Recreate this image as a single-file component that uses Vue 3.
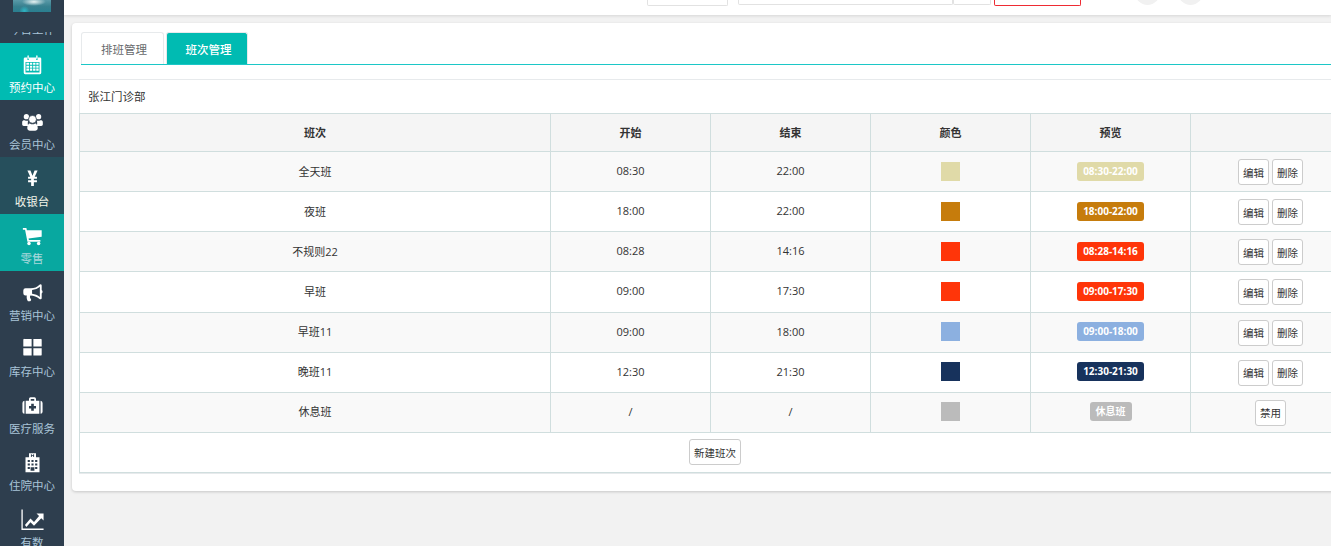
<script setup>
const nav = [
  { label: '预约中心', icon: 'calendar', tone: 'active' },
  { label: '会员中心', icon: 'users', tone: '' },
  { label: '收银台', icon: 'yen', tone: 'cash' },
  { label: '零售', icon: 'cart', tone: 'retail' },
  { label: '营销中心', icon: 'horn', tone: '' },
  { label: '库存中心', icon: 'grid', tone: '' },
  { label: '医疗服务', icon: 'med', tone: '' },
  { label: '住院中心', icon: 'hospital', tone: '' },
  { label: '有数', icon: 'chart', tone: '' }
]
const rows = [
  { name: '全天班', start: '08:30', end: '22:00', color: '#e0daa8', preview: '08:30-22:00' },
  { name: '夜班', start: '18:00', end: '22:00', color: '#c67c0c', preview: '18:00-22:00' },
  { name: '不规则22', start: '08:28', end: '14:16', color: '#ff3509', preview: '08:28-14:16' },
  { name: '早班', start: '09:00', end: '17:30', color: '#ff3509', preview: '09:00-17:30' },
  { name: '早班11', start: '09:00', end: '18:00', color: '#8cb0e0', preview: '09:00-18:00' },
  { name: '晚班11', start: '12:30', end: '21:30', color: '#17325c', preview: '12:30-21:30' },
  { name: '休息班', start: '/', end: '/', color: '#bbbbbb', preview: '休息班', rest: true }
]
</script>

<template>
  <div class="page">
    <aside class="side">
      <div class="logo-wrap"><div class="logo"></div></div>
      <div class="clipped"><span>今日工作</span></div>
      <a v-for="n in nav" :key="n.label" class="nav" :class="n.tone">
        <svg class="ico" viewBox="0 0 24 24" fill="#fff">
          <template v-if="n.icon === 'calendar'">
            <path fill-rule="evenodd" d="M3.500 4H6V6.500H8V4H16V6.500H18V4H20.500A1.500 1.500 0 0 1 22 5.500V21.500A1.500 1.500 0 0 1 20.500 23H3.500A1.500 1.500 0 0 1 2 21.500V5.500A1.500 1.500 0 0 1 3.500 4ZM4 9V21H20V9Z"/>
            <rect x="6.200" y="1.500" width="1.600" height="4.200" rx=".8"/><rect x="16.200" y="1.500" width="1.600" height="4.200" rx=".8"/>
            <path d="M5 10h3v2.300H5zM9 10h2.700v2.300H9zM12.700 10h2.700v2.300h-2.700zM16.300 10H19v2.300h-2.700zM5 13.300h3v2.300H5zM9 13.300h2.700v2.300H9zM12.700 13.300h2.700v2.300h-2.700zM16.300 13.300H19v2.300h-2.700zM5 16.600h3V19H5zM9 16.600h2.700V19H9zM12.700 16.600h2.700V19h-2.700zM16.300 16.600H19V19h-2.700z"/>
          </template>
          <template v-else-if="n.icon === 'users'">
            <circle cx="5" cy="6.500" r="3"/><circle cx="19" cy="6.500" r="3"/>
            <path d="M.2 12.500C.2 11 2 10.300 3.500 10.800 5 11.400 6 11 7 11 6.400 13 6.500 15 7.200 17H2C1 17 .2 16 .2 15ZM23.800 12.500C23.800 11 22 10.300 20.500 10.800 19 11.400 18 11 17 11 17.600 13 17.500 15 16.800 17H22C23 17 23.800 16 23.800 15Z"/>
            <circle cx="12" cy="9.500" r="4.500" stroke="#2e3e4e" stroke-width=".8"/>
            <path d="M6 19.500C6 16.500 7.500 14 9 14.200 11 15.500 13 15.500 15 14.200 16.500 14 18 16.500 18 19.500 18 21.500 16.500 22.500 15 22.500H9C7.500 22.500 6 21.500 6 19.500Z"/>
          </template>
          <template v-else-if="n.icon === 'yen'">
            <path transform="translate(12 11.500) scale(.78 .92) translate(-12 -12)" d="M4.500 2.500H9L12 9.200 15 2.500H19.500L15.300 10.500H18.500V13H14V14.800H18.500V17.300H14V22H10V17.300H5.500V14.800H10V13H5.500V10.500H8.700Z"/>
          </template>
          <template v-else-if="n.icon === 'cart'">
            <path d="M1 3.500H5L5.600 6H22.500V13.500L7.500 15.300 7.900 17H21V19H6.200L3.500 5.500H1Z"/>
            <circle cx="8" cy="21" r="2"/><circle cx="19" cy="21" r="2"/>
          </template>
          <template v-else-if="n.icon === 'horn'">
            <path fill-rule="evenodd" d="M21 2.500A1.500 1.500 0 0 1 22.500 4V9.200A2.300 2.300 0 0 1 22.500 13V18.500A1.500 1.500 0 0 1 20 19.300C17 16.500 13.500 15.500 9.500 15.300 8.800 16.800 9 18 10.200 19.500 10.800 20.500 10.300 21.500 9.300 22H6.800C5.500 20 5 17.500 5.500 15.300H4A2.500 2.500 0 0 1 1.500 12.800V9.700A2.500 2.500 0 0 1 4 7.200H10C14 7.200 17.500 5.800 20 3.100A1.500 1.500 0 0 1 21 2.500ZM20.400 5.500C18 7.500 15 8.800 11.500 9.100V13.300C15 13.700 18 15 20.400 17Z"/>
          </template>
          <template v-else-if="n.icon === 'grid'">
            <path transform="translate(0 -1.500)" d="M1.500 3.500A1.200 1.200 0 0 1 2.700 2.500H11V11.200H1.500ZM13 2.500H21.300A1.200 1.200 0 0 1 22.500 3.500V11.200H13ZM1.500 13.200H11V21.500H2.700A1.200 1.200 0 0 1 1.500 20.500ZM13 13.200H22.500V20.500A1.200 1.200 0 0 1 21.300 21.500H13Z"/>
          </template>
          <template v-else-if="n.icon === 'med'">
            <path fill-rule="evenodd" d="M8 6.500V4.500A1.800 1.800 0 0 1 9.800 2.700H14.200A1.800 1.800 0 0 1 16 4.500V6.500H19.800V21.500H4.200V6.500ZM10 4.700V6.500H14V4.700ZM10.500 10V12.500H8V15.500H10.500V18H13.500V15.500H16V12.500H13.500V10Z"/>
            <path d="M2.800 6.500V21.500A2.500 2.500 0 0 1 .5 19V9A2.500 2.500 0 0 1 2.800 6.500ZM21.200 6.500A2.500 2.500 0 0 1 23.500 9V19A2.500 2.500 0 0 1 21.200 21.500Z"/>
          </template>
          <template v-else-if="n.icon === 'hospital'">
            <path fill-rule="evenodd" d="M8 1.500H16V6H20V23H4V6H8ZM10.200 2.500V5.800H11.200V4.600H12.800V5.800H13.800V2.500H12.800V3.600H11.200V2.500ZM6.500 9V11.500H9V9ZM10.800 9V11.500H13.200V9ZM15 9V11.500H17.500V9ZM6.500 13V15.500H9V13ZM10.800 13V15.500H13.200V13ZM15 13V15.500H17.500V13ZM6.500 17V19.500H9V17ZM15 17V19.500H17.500V17ZM9.800 17.500V21.500H14.200V17.500Z"/>
          </template>
          <template v-else>
            <g transform="translate(12 12) scale(1.150) translate(-12 -12)">
              <path d="M1 2H2.300V21H23V22.500H1Z"/>
              <path d="M4.500 17.500 10 11 13.500 14.500 18.500 8.500 16 6H23V13L20.700 10.700 13.500 18.300 10 14.800 6 19.500Z"/>
            </g>
          </template>
        </svg>
        <span class="nav-label">{{ n.label }}</span>
      </a>
    </aside>

    <div class="main">
      <header class="top">
        <div class="ctl select"></div>
        <div class="search">
          <div class="ctl input"></div>
          <div class="ctl go"></div>
        </div>
        <div class="ctl red"></div>
        <div class="round first"></div>
        <div class="round"></div>
      </header>

      <section class="card">
        <nav class="tabs">
          <a class="tab">排班管理</a>
          <a class="tab on">班次管理</a>
        </nav>

        <div class="panel">
          <div class="panel-title">张江门诊部</div>
          <table class="grid">
            <colgroup>
              <col class="c1" /><col class="c2" /><col class="c2" /><col class="c2" /><col class="c2" /><col class="c2" />
            </colgroup>
            <thead>
              <tr>
                <th>班次</th><th>开始</th><th>结束</th><th>颜色</th><th>预览</th><th></th>
              </tr>
            </thead>
            <tbody>
              <tr v-for="r in rows" :key="r.name">
                <td>{{ r.name }}</td>
                <td>{{ r.start }}</td>
                <td>{{ r.end }}</td>
                <td><span class="swatch" :style="{ background: r.color }"></span></td>
                <td><span class="chip" :style="{ background: r.color }">{{ r.preview }}</span></td>
                <td class="ops">
                  <template v-if="r.rest"><button class="btn">禁用</button></template>
                  <template v-else><button class="btn">编辑</button><button class="btn">删除</button></template>
                </td>
              </tr>
            </tbody>
            <tfoot>
              <tr>
                <td colspan="6" class="foot"><button class="btn add">新建班次</button></td>
              </tr>
            </tfoot>
          </table>
        </div>
      </section>
    </div>
  </div>
</template>

<style>
html, body { margin: 0; height: 100%; overflow: hidden; background: #f2f2f2; }
</style>

<style scoped>
.page {
  display: flex;
  width: 1331px;
  height: 546px;
  overflow: hidden;
  font-family: "Open Sans", "Noto Sans CJK SC", sans-serif;
  font-size: 11px;
  color: #333;
  background: #f2f2f2;
}
.side {
  flex: 0 0 64px;
  width: 64px;
  height: 546px;
  overflow: hidden;
  background: #2e3e4e;
}
.logo-wrap { height: 12px; display: flex; justify-content: center; overflow: hidden; }
.logo {
  width: 38px;
  height: 12px;
  background:
    radial-gradient(ellipse 12px 4px at 55% 15%, #e6f2f2 0%, rgba(230, 242, 242, 0) 100%),
    radial-gradient(circle 5px at 30% 90%, #2fb6c4 0%, rgba(47, 182, 196, 0) 100%),
    linear-gradient(180deg, #5a9aa8 0%, #37808f 55%, #2a7f90 100%);
}
.clipped {
  height: 31px;
  overflow: hidden;
  position: relative;
  text-align: center;
  color: #a9c4d8;
  font-size: 11.500px;
}
.clipped span {
  position: absolute;
  left: 0;
  right: 0;
  top: 7px;
  height: 22px;
  line-height: 22px;
  clip-path: inset(13px 0 0 0);
}
.nav {
  display: flex;
  flex-direction: column;
  align-items: center;
  height: 56.875px;
  box-sizing: border-box;
  padding-top: 11px;
  color: #a9c4d8;
  font-size: 11.500px;
}
.nav.active { background: #00bbb2; color: #fff; }
.nav.cash { background: #264f5c; color: #f2f5ea; }
.nav.retail { background: #08a8a0; color: #a9d8dc; }
.ico { width: 21px; height: 21px; display: block; flex: none; overflow: visible; }
.nav-label { line-height: 16px; margin-top: 5px; white-space: nowrap; }

.main { flex: 0 0 1267px; width: 1267px; min-width: 0; }
.top {
  height: 15px;
  background: #fff;
  box-shadow: 0 1px 3px rgba(0, 0, 0, .12);
  display: flex;
  align-items: flex-end;
  padding: 0 0 10px 583px;
  box-sizing: border-box;
  position: relative;
}
.ctl { box-sizing: border-box; background: #fff; border: 1px solid #e2e2e2; border-top: 0; border-radius: 0 0 2px 2px; height: 6px; }
.select { width: 81px; margin-bottom: -1px; }
.search { display: flex; margin-left: 10px; }
.input { width: 215px; height: 5px; }
.go { width: 38px; height: 5px; }
.red { width: 87px; margin-left: 3px; margin-bottom: -1px; border-color: #ee2b33; }
.round { width: 25px; height: 25px; border-radius: 50%; background: #f1f1f1; margin-left: 18px; flex: none; }
.round.first { margin-left: 54px; }

.card {
  width: 1320px;
  height: 468px;
  margin: 8px 0 0 8px;
  box-sizing: border-box;
  background: #fff;
  border-radius: 4px;
  box-shadow: 0 1px 3px rgba(0, 0, 0, .18);
  padding: 9px 7px 0 7px;
}
.tabs {
  display: flex;
  gap: 2px;
  height: 33px;
  box-sizing: border-box;
  margin-left: 2px;
  border-bottom: 1px solid #1cc7c7;
}
.tab {
  width: 83px;
  height: 32px;
  box-sizing: border-box;
  padding-left: 3px;
  border: 1px solid #e7eaec;
  border-bottom: 0;
  border-radius: 3px 3px 0 0;
  text-align: center;
  line-height: 33px;
  font-size: 11.500px;
  color: #676a6c;
  background: #fff;
}
.tab.on { background: #00bbb2; color: #fff; font-weight: 500; width: 82px; }

.panel {
  margin-top: 14px;
  width: 1290px;
  box-sizing: border-box;
  border: 1px solid #e7eaec;
  border-right: 0;
}
.panel-title {
  height: 33px;
  line-height: 33px;
  padding-left: 8px;
  font-size: 11.500px;
  color: #333;
  background: #fff;
  box-sizing: border-box;
}
.grid {
  border-collapse: collapse;
  table-layout: fixed;
  width: 1271px;
  margin-left: -1px;
  color: #333;
}
.c1 { width: 471px; }
.c2 { width: 160px; }
.grid th, .grid td {
  border: 1px solid #d0dede;
  text-align: center;
  vertical-align: middle;
  font-size: 11px;
}
.grid th { height: 36px; padding: 0 0 1px; background: #f5f5f5; font-weight: 700; color: #333; }
.grid td { height: 37.140px; padding: 0 0 2px; background: #fff; }
.grid td.ops { height: 38.140px; padding: 0 0 1px; font-size: 0; }
.grid tbody tr:nth-child(odd) td { background: #f9f9f9; }
.grid td.foot { height: 39px; padding: 0; background: #fff; }
.swatch { display: block; width: 19px; height: 19px; margin: 1px auto 0; }
.chip {
  display: inline-block;
  height: 19px;
  line-height: 19px;
  margin-top: 1px;
  padding: 0 6px;
  border-radius: 3px;
  color: #fff;
  font-weight: 700;
  font-size: 10px;
  vertical-align: middle;
}
.btn {
  height: 26px;
  width: 31px;
  box-sizing: border-box;
  padding: 0;
  margin: 2px 1.500px 0;
  background: #fff;
  border: 1px solid #ccc;
  border-radius: 3px;
  font-family: inherit;
  font-size: 10.500px;
  color: #333;
  vertical-align: middle;
}
.btn.add { width: 52px; margin: 0; }
</style>
